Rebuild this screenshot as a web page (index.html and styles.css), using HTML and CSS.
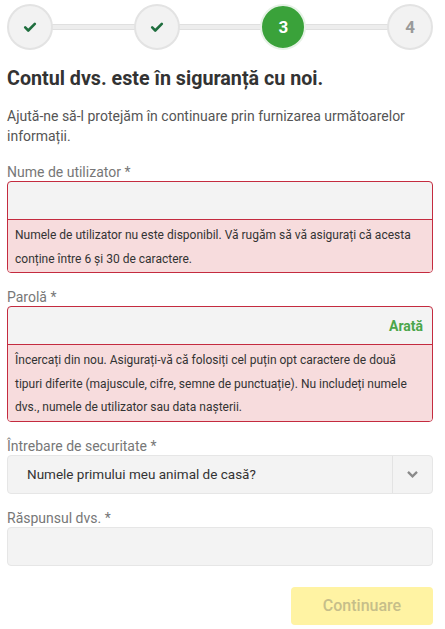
FILE: index.html
```html
<!DOCTYPE html>
<html lang="ro">
<head>
    <meta charset="UTF-8">
    <meta name="viewport" content="width=device-width, initial-scale=1.0">
    <title>Înregistrare</title>
    <link rel="stylesheet" href="styles.css">
</head>
<body>
    <div class="page">
        <div class="stepper">
            <div class="step done">
                <svg viewBox="0 0 16 16" width="14" height="14"><path d="M2.5 8.5 L6 12 L13.5 4.5" fill="none" stroke="#1f6e3e" stroke-width="3" stroke-linecap="round" stroke-linejoin="round"/></svg>
            </div>
            <div class="step-line"></div>
            <div class="step done">
                <svg viewBox="0 0 16 16" width="14" height="14"><path d="M2.5 8.5 L6 12 L13.5 4.5" fill="none" stroke="#1f6e3e" stroke-width="3" stroke-linecap="round" stroke-linejoin="round"/></svg>
            </div>
            <div class="step-line"></div>
            <div class="step active">3</div>
            <div class="step-line"></div>
            <div class="step">4</div>
        </div>

        <h1>Contul dvs. este în siguranță cu noi.</h1>
        <p class="intro">Ajută-ne să-l protejăm în continuare prin furnizarea următoarelor informații.</p>

        <div class="field">
            <label>Nume de utilizator *</label>
            <div class="box error">
                <div class="input"></div>
                <div class="error-msg">Numele de utilizator nu este disponibil. Vă rugăm să vă asigurați că acesta conține între 6 și 30 de caractere.</div>
            </div>
        </div>

        <div class="field">
            <label>Parolă *</label>
            <div class="box error">
                <div class="input"><span class="show">Arată</span></div>
                <div class="error-msg">Încercați din nou. Asigurați-vă că folosiți cel puțin opt caractere de două tipuri diferite (majuscule, cifre, semne de punctuație). Nu includeți numele dvs., numele de utilizator sau data nașterii.</div>
            </div>
        </div>

        <div class="field">
            <label>Întrebare de securitate *</label>
            <div class="box select">
                <div class="select-text">Numele primului meu animal de casă?</div>
                <div class="select-arrow">
                    <svg viewBox="0 0 14 10" width="13" height="9"><path d="M2 2 L7 7 L12 2" fill="none" stroke="#8a8a8a" stroke-width="2.6"/></svg>
                </div>
            </div>
        </div>

        <div class="field">
            <label>Răspunsul dvs. *</label>
            <div class="box">
                <div class="input"></div>
            </div>
        </div>

        <div class="actions">
            <button class="continue" disabled>Continuare</button>
        </div>
    </div>
</body>
</html>
```

FILE: styles.css
```css
body {
    font-family: Roboto, "Liberation Sans", Arial, sans-serif;
    background-color: #fff;
    margin: 0;
    padding: 0;
    color: #333;
}
.page {
    padding: 4px 12px 0 7px;
}
.stepper {
    display: flex;
    align-items: center;
}
.step {
    width: 42px;
    height: 42px;
    flex: none;
    border-radius: 50%;
    background: #f2f2f2;
    border: 2px solid #e3e3e3;
    display: flex;
    align-items: center;
    justify-content: center;
    font-size: 17px;
    font-weight: bold;
    color: #9a9a9a;
    position: relative;
    z-index: 1;
}
.step.active {
    background: #3aa23a;
    border-color: #e6f2e6;
    color: #fff;
}
.step-line {
    flex: 1;
    height: 4px;
    margin: 0 -3px;
    background: #ededed;
    border-top: 1px solid #e0e0e0;
    border-bottom: 1px solid #e0e0e0;
}
h1 {
    font-size: 19.7px;
    line-height: 24px;
    font-weight: bold;
    color: #333;
    margin: 17px 0 0;
}
.intro {
    font-size: 14px;
    line-height: 20px;
    color: #555;
    margin: 15px 0 18px;
}
.field {
    margin-top: 16px;
}
.field label {
    display: block;
    font-size: 14px;
    line-height: 16px;
    color: #777;
    margin-bottom: 1px;
}
.box {
    border: 1px solid #e6e6e6;
    border-radius: 4px;
    background: #f3f3f3;
    overflow: hidden;
}
.box.error {
    border-color: #c42b3f;
}
.input {
    height: 37px;
    display: flex;
    align-items: center;
    justify-content: flex-end;
    padding: 0 9px;
}
.show {
    font-size: 14px;
    font-weight: bold;
    color: #4ba64b;
}
.error-msg {
    border-top: 1px solid #c42b3f;
    background: #f7dcdd;
    font-size: 12px;
    line-height: 23.5px;
    color: #333;
    padding: 4px 7px 1px;
}
.box.select {
    display: flex;
    height: 37px;
}
.select-text {
    flex: 1;
    display: flex;
    align-items: center;
    padding-left: 19px;
    font-size: 13.5px;
    color: #333;
}
.select-arrow {
    width: 39px;
    border-left: 1px solid #e3e3e3;
    display: flex;
    align-items: center;
    justify-content: center;
}
.actions {
    display: flex;
    justify-content: flex-end;
    margin-top: 21px;
}
.continue {
    width: 142px;
    height: 38px;
    border: none;
    border-radius: 4px;
    background: #fff3a3;
    color: #c6be8a;
    font-family: Roboto, "Liberation Sans", Arial, sans-serif;
    font-size: 16px;
    font-weight: 500;
}
```
